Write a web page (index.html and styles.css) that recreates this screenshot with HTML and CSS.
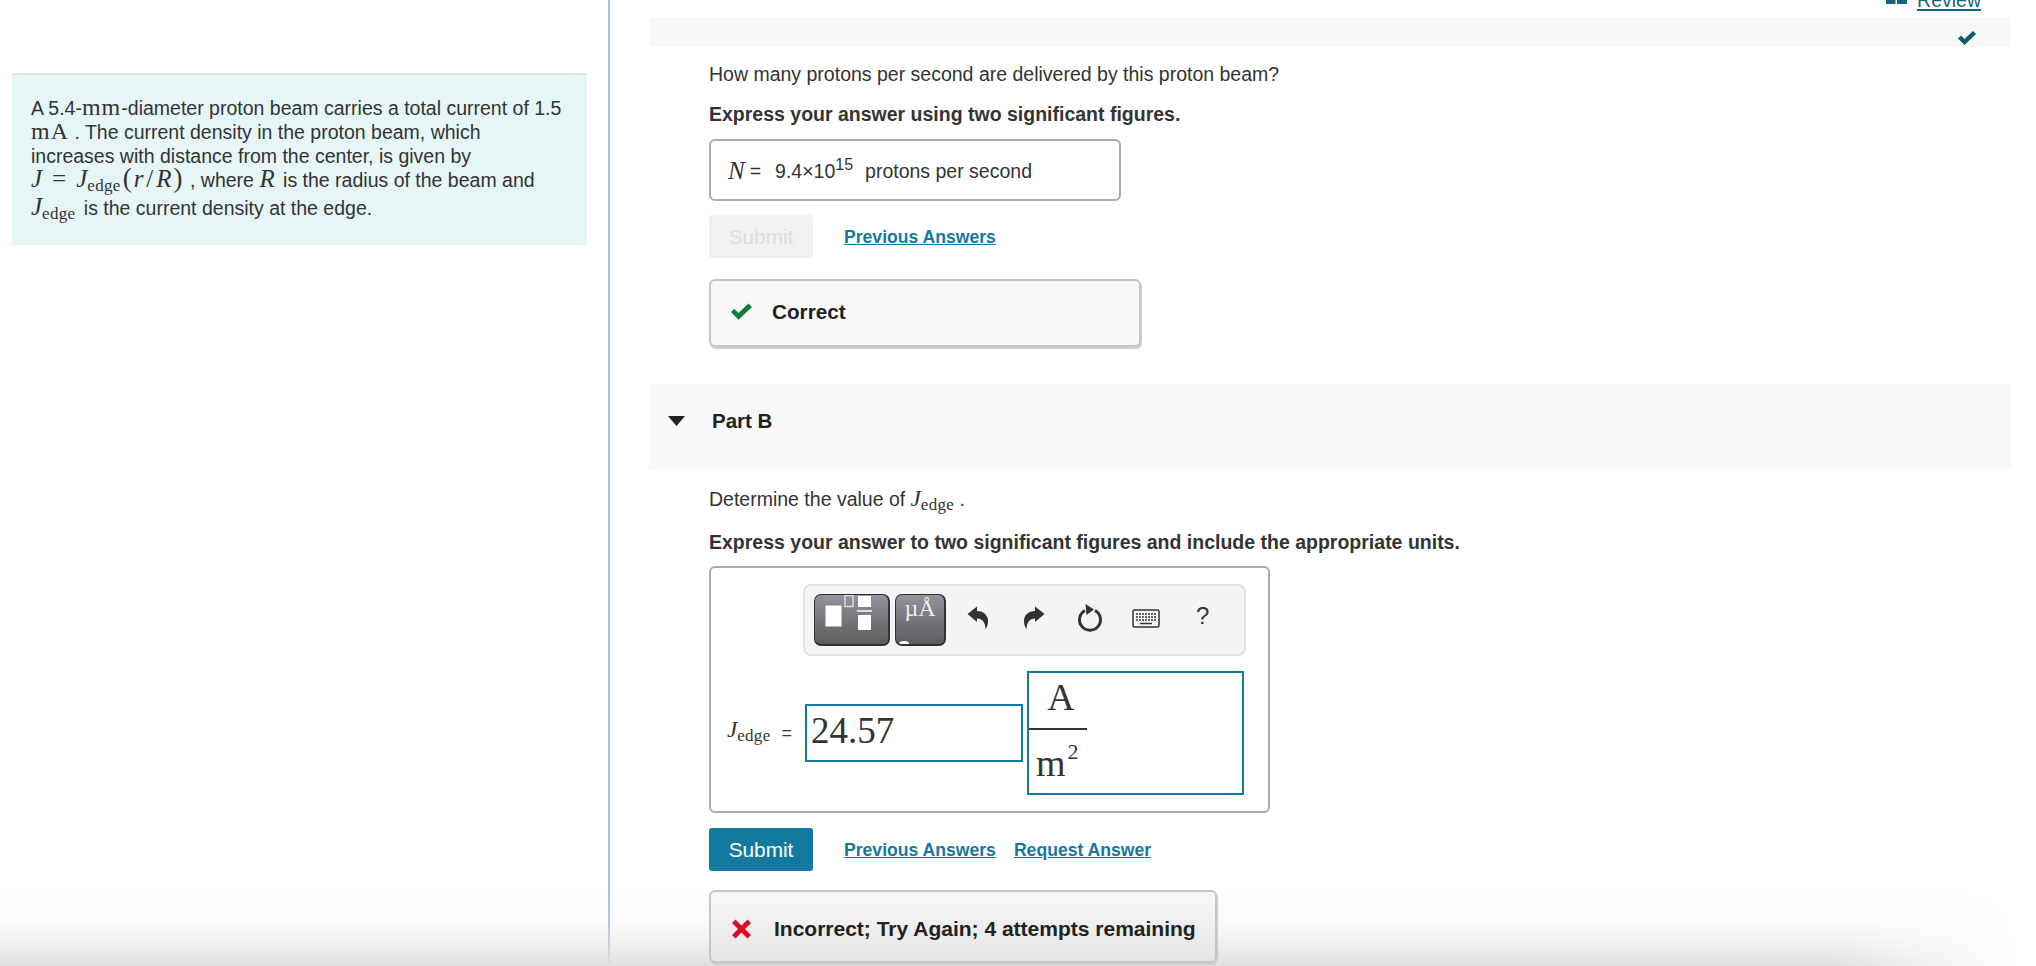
FILE: index.html
```html
<!DOCTYPE html>
<html lang="en">

<head>
    <meta charset="UTF-8">
    <title>Part B</title>
    <link rel="stylesheet" href="styles.css">
</head>

<body>
    <div class="page">
        <div class="left">
            <div class="intro">
                <div>A 5.4-<span class="m mm">mm</span>-diameter proton beam carries a total current of 1.5</div>
                <div><span class="m mm">mA</span> . The current density in the proton beam, which</div>
                <div>increases with distance from the center, is given by</div>
                <div><span class="m big"><i>J</i><span class="rel">=</span><i>J</i><sub>edge</sub><span class="paren">(</span><i>r</i><span class="slash">/</span><i>R</i><span class="paren">)</span></span> , where <span class="m big r"><i>R</i></span> is the radius of the beam and</div>
                <div class="last"><span class="m big r"><i>J</i><sub>edge</sub></span> is the current density at the edge.</div>
            </div>
        </div>

        <div class="right">
            <div class="review">
                <svg class="book" width="21" height="5" viewBox="0 0 21 5"><rect width="9.500" height="4"/><rect x="11" width="10" height="4"/></svg>
                <a class="review-link">Review</a>
            </div>

            <div class="band band-top">
                <svg class="done" width="20" height="16" viewBox="0 0 20 16"><path d="M1 8.500 L4 5.500 L7.500 9 L16 1 L19 4 L7.500 15 Z"/></svg>
            </div>

            <div class="body">
                <p class="q">How many protons per second are delivered by this proton beam?</p>
                <p class="q bold">Express your answer using two significant figures.</p>

                <div class="answer">
                    <span class="m n"><i>N</i></span><span class="eq">=</span>
                    <span class="val">9.4×10<sup>15</sup></span>
                    <span>protons per second</span>
                </div>

                <div class="actions first">
                    <button class="btn off">Submit</button>
                    <a class="link">Previous Answers</a>
                </div>

                <div class="result correct">
                    <svg width="23" height="17" viewBox="0 0 22 17"><path class="ok" d="M0.500 9 L3.800 5.700 L8 10 L18 0.500 L21.500 4 L8 16.800 Z"/></svg>
                    <span>Correct</span>
                </div>
            </div>

            <div class="band band-part">
                <svg class="tri" width="17" height="10" viewBox="0 0 17 11" preserveAspectRatio="none"><path d="M0 0 H17 L8.500 11 Z"/></svg>
                <span class="part-name">Part B</span>
            </div>

            <div class="body">
                <p class="q det">Determine the value of <span class="m big"><i>J</i><sub>edge</sub></span> .</p>
                <p class="q bold exp">Express your answer to two significant figures and include the appropriate units.</p>

                <div class="editor">
                    <div class="toolbar">
                        <div class="tbtn wide">
                            <svg width="73" height="49" viewBox="0 0 73 49">
                                <rect x="10.500" y="10.500" width="16" height="21" fill="#fff"/>
                                <rect x="30" y="0.500" width="8" height="11" fill="none" stroke="#ddd" stroke-width="1.500"/>
                                <rect x="43" y="1" width="13" height="11" fill="#fff"/>
                                <rect x="42" y="15" width="15" height="2" fill="#ddd"/>
                                <rect x="43" y="20" width="13" height="15" fill="#fff"/>
                            </svg>
                        </div>
                        <div class="tbtn unit">
                            <span class="mu">µÅ</span>
                            <span class="corner"></span>
                        </div>
                        <svg class="tool t-undo" width="22" height="24" viewBox="0 0 22 24"><path d="M0.500 8 L10 0.500 V5 C17 5 21 9.500 21 15 C21 18.500 20 21 18.500 23.500 C18.500 17 15.500 12.500 10 12.500 V16 Z"/></svg>
                        <svg class="tool t-redo" width="22" height="24" viewBox="0 0 22 24"><path d="M21.500 8 L12 0.500 V5 C5 5 1 9.500 1 15 C1 18.500 2 21 3.500 23.500 C3.500 17 6.500 12.500 12 12.500 V16 Z"/></svg>
                        <svg class="tool t-reset" width="26" height="30" viewBox="0 0 26 30"><path class="ring" d="M8 7.500 A10.500 10.500 0 1 0 18 7.500"/><path d="M8.500 1 L17 6.500 L9.500 12 Z"/></svg>
                        <svg class="tool t-keys" width="28" height="19" viewBox="0 0 28 19">
                            <rect x="1" y="1" width="26" height="17" rx="1.500" fill="none" stroke="#333" stroke-width="1.500"/>
                            <path class="keyrow" d="M4 5 H24 M4 8 H24 M4 11 H24"/>
                            <path class="keybar" d="M8 14.500 H20"/>
                        </svg>
                        <span class="help">?</span>
                    </div>

                    <div class="math-row">
                        <span class="m big label"><i>J</i><sub>edge</sub></span>
                        <span class="eq2">=</span>
                        <div class="input">24.57</div>
                        <div class="input units">
                            <div class="frac">
                                <div class="top">A</div>
                                <div class="bottom">m<sup>2</sup></div>
                            </div>
                        </div>
                    </div>
                </div>

                <div class="actions second">
                    <button class="btn">Submit</button>
                    <a class="link">Previous Answers</a>
                    <a class="link">Request Answer</a>
                </div>

                <div class="result wrong">
                    <svg width="23" height="20" viewBox="0 0 20 20"><path class="bad" d="M4 0.500 L10 6.500 L16 0.500 L19.500 4 L13.500 10 L19.500 16 L16 19.500 L10 13.500 L4 19.500 L0.500 16 L6.500 10 L0.500 4 Z"/></svg>
                    <span>Incorrect; Try Again; 4 attempts remaining</span>
                </div>
            </div>
        </div>

        <div class="fade"></div>
    </div>
</body>

</html>
```

FILE: styles.css
```css
* {
    margin: 0;
    padding: 0;
    box-sizing: border-box;
}

body {
    background-color: #fff;
    color: #333;
    font-family: "Liberation Sans", Arial, sans-serif;
    font-size: 19.500px;
    line-height: 24px;
}

.page {
    position: relative;
    display: flex;
    width: 2036px;
    height: 966px;
    overflow: hidden;
}

/* left column */
.left {
    width: 610px;
    height: 966px;
    flex: none;
    padding: 73px 21px 0 12px;
    border-right: 2px solid #aec3d8;
}

.intro {
    height: 172px;
    padding: 21px 19px 0;
    background-color: #e6f6f7;
    border-top: 2px solid #dce4e8;
    white-space: nowrap;
}

.intro .big {
    font-size: 25px;
}

.intro .r {
    margin-right: 3px;
}

.intro .last {
    margin-top: 4px;
}

.m {
    font-family: "Liberation Serif", serif;
}

.mm {
    font-size: 24px;
    line-height: 0;
    letter-spacing: 1px;
}

.big {
    font-size: 23px;
    line-height: 0;
}

.big sub {
    font-size: 17px;
    line-height: 0;
    vertical-align: -4px;
    letter-spacing: 0.300px;
}

.rel {
    margin: 0 10px;
}

.slash {
    margin: 0 3px;
}

.paren {
    font-size: 27px;
    margin: 0 2px;
}

/* right column */
.right {
    flex: 1;
    padding: 0 25px 0 39px;
}

.review {
    display: flex;
    justify-content: flex-end;
    align-items: flex-start;
    height: 17px;
    padding-right: 30px;
    overflow: hidden;
}

.book {
    fill: #13647c;
    margin-right: 10px;
}

.review-link {
    height: 9px;
    color: #13647c;
    font-size: 19.500px;
    line-height: 0;
    border-bottom: 2px solid #13647c;
    box-sizing: content-box;
}

.band {
    display: flex;
    align-items: center;
    background-color: #f8f8f8;
}

.band-top {
    justify-content: flex-end;
    height: 30px;
    padding: 0 34px 0 0;
}

.done {
    fill: #005d70;
    margin-top: 12px;
}

.band-part {
    height: 85px;
    margin-top: 37px;
    padding: 0 0 12px 19px;
}

.tri {
    fill: #222;
}

.part-name {
    margin-left: 27px;
    font-size: 20.500px;
    font-weight: bold;
    color: #222;
}

.body {
    padding-left: 60px;
}

.q {
    margin-top: 15px;
}

.bold {
    margin-top: 16px;
    font-weight: bold;
}

.det {
    margin-top: 18px;
}

.exp {
    margin-top: 19px;
}

.answer {
    display: flex;
    align-items: center;
    width: 412px;
    height: 62px;
    margin-top: 13px;
    padding: 2px 0 0 17px;
    border: 2px solid #aaa;
    border-radius: 6px;
}

.n {
    font-size: 25px;
}

.eq {
    margin: 0 14px 0 5px;
}

.val {
    margin-right: 12px;
}

.val sup {
    font-size: 16px;
    line-height: 0;
    vertical-align: 8px;
}

.actions {
    display: flex;
    align-items: center;
}

.first {
    height: 43px;
    margin-top: 14px;
}

.second {
    height: 43px;
    margin-top: 15px;
}

.btn {
    width: 104px;
    height: 100%;
    margin-right: 31px;
    border: 0;
    border-radius: 3px;
    background-color: #14799f;
    color: #fff;
    font-family: inherit;
    font-size: 20.800px;
}

.off {
    background-color: #f1f1f1;
    color: #dcdcdc;
}

.link {
    margin-right: 18px;
    color: #14799f;
    font-size: 17.600px;
    font-weight: bold;
    text-decoration: underline;
}

.result {
    display: flex;
    align-items: center;
    border: 2px solid #c6c6c6;
    border-radius: 6px;
    background-color: #f8f8f8;
    box-shadow: 1px 2px 1px #ccc;
    color: #222;
    font-weight: bold;
    font-size: 20.700px;
}

.correct {
    width: 432px;
    height: 68px;
    margin-top: 21px;
    padding: 0 0 3px 19px;
}

.correct span {
    margin-left: 19px;
}

.wrong {
    position: relative;
    z-index: 2;
    width: 508px;
    height: 73px;
    margin-top: 19px;
    padding: 5px 0 0 19px;
    background: linear-gradient(#f8f8f8, #e4e4e4);
}

.wrong span {
    margin-left: 21px;
    font-size: 21px;
}

.ok {
    fill: #0f7d3d;
}

.bad {
    fill: #da0b2c;
}

/* answer editor */
.editor {
    width: 561px;
    height: 247px;
    margin-top: 12px;
    padding: 16px 0 0 92px;
    border: 2px solid #aaa;
    border-radius: 6px;
}

.toolbar {
    display: flex;
    align-items: flex-start;
    width: 443px;
    height: 72px;
    padding: 8px 0 0 9px;
    background-color: #f4f4f4;
    border: 2px solid #e2e2e2;
    border-radius: 8px;
}

.tbtn {
    position: relative;
    height: 52px;
    border-radius: 7px;
    border: 2px solid #333;
    border-width: 1px 2px 2px 1px;
    background: linear-gradient(#93939d, #5c5c5c);
}

.wide {
    width: 76px;
}

.unit {
    width: 51px;
    margin-left: 5px;
    overflow: hidden;
}

.mu {
    display: block;
    text-align: center;
    color: #eee;
    font-family: "Liberation Serif", serif;
    font-size: 24px;
    line-height: 26px;
}

.corner {
    position: absolute;
    left: 3px;
    bottom: -2px;
    width: 10px;
    height: 5px;
    border-radius: 50%;
    background-color: #fff;
}

.tool {
    flex: none;
    fill: #333;
}

.t-undo {
    margin: 12px 0 0 21px;
}

.t-redo {
    margin: 12px 0 0 34px;
}

.t-reset {
    margin: 9px 0 0 32px;
}

.ring {
    fill: none;
    stroke: #333;
    stroke-width: 3px;
}

.t-keys {
    margin: 15px 0 0 29px;
}

.keyrow {
    fill: none;
    stroke: #333;
    stroke-width: 1.500px;
    stroke-dasharray: 2 1;
}

.keybar {
    fill: none;
    stroke: #333;
    stroke-width: 1.500px;
}

.help {
    margin: 7px 0 0 36px;
    font-size: 24px;
    line-height: 30px;
}

.math-row {
    display: flex;
    align-items: center;
    width: 558px;
    height: 124px;
    margin: 15px 0 0 -92px;
    padding-left: 16px;
}

.label {
    font-size: 23px;
}

.eq2 {
    margin: 0 13px 0 11px;
    font-size: 18px;
}

.input {
    width: 218px;
    height: 58px;
    padding-left: 4px;
    border: 2px solid #14799f;
    font-family: "Liberation Serif", serif;
    font-size: 37px;
    line-height: 50px;
}

.units {
    width: 217px;
    height: 124px;
    margin-left: 4px;
    padding: 0;
}

.frac {
    width: 58px;
}

.top {
    height: 57px;
    padding-left: 6px;
    border-bottom: 2px solid #333;
    text-align: center;
    font-size: 38px;
    line-height: 49px;
}

.bottom {
    padding: 10px 0 0 7px;
    font-size: 38px;
    line-height: 46px;
}

.bottom sup {
    font-size: 22px;
    line-height: 0;
    vertical-align: 17px;
    margin-left: 2px;
}

/* shading along the bottom of the window */
.fade {
    position: absolute;
    z-index: 1;
    left: 0;
    right: 0;
    bottom: 0;
    height: 76px;
    background: linear-gradient(rgba(224, 224, 224, 0), rgba(224, 224, 224, 0.12) 40%, rgba(224, 224, 224, 0.5) 70%, #e0e0e0);
    -webkit-mask-image: linear-gradient(to right, #000 90%, transparent 99%);
    mask-image: linear-gradient(to right, #000 90%, transparent 99%);
    pointer-events: none;
}
```
